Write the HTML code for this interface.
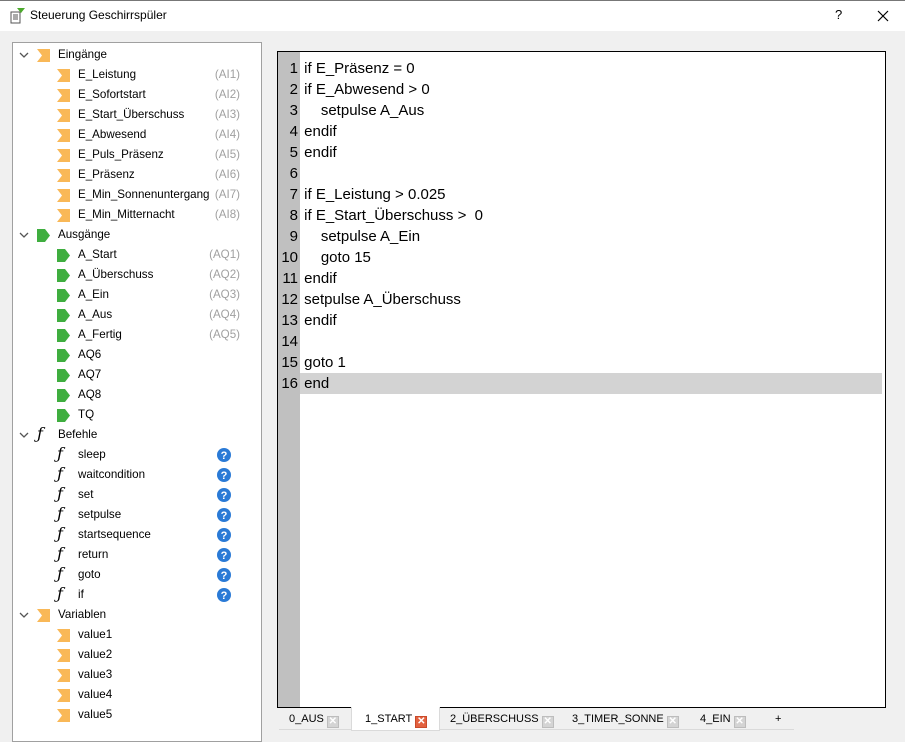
<!DOCTYPE html>
<html><head><meta charset="utf-8"><style>
*{margin:0;padding:0;box-sizing:border-box}
body{width:905px;height:738px;background:#f0f0f0;font-family:"Segoe UI","Liberation Sans",sans-serif;position:relative;overflow:hidden;font-size:12px;color:#000}
.title{position:absolute;left:0;top:0;width:905px;height:31px;background:#fff;border-top:1px solid #777}
.title span{position:absolute;left:30px;top:7px;font-size:12px}
.panel{position:absolute;left:12px;top:42px;width:250px;height:700px;background:#fff;border:1px solid #a0a0a0;font-size:11.6px}
.r{position:absolute;height:20px;line-height:20px;white-space:nowrap}
.g{position:absolute;right:21px;color:#a0a0a0;height:20px;line-height:20px}
.ed{position:absolute;left:277px;top:51px;width:609px;height:657px;background:#fff;border:1px solid #000}
.gut{position:absolute;left:0;top:0;width:22px;height:655px;background:#c0c0c0}
.l{position:absolute;left:0;height:21px;line-height:21px;font-size:15px;width:607px;white-space:pre}
.l b{font-weight:normal;display:inline-block;width:22px;text-align:right;padding-right:2px}
.tab{position:absolute;top:708px;height:22px;line-height:22px;font-size:11px;border-bottom:1px solid #dadada;background:#f0f0f0;padding-left:10px}
.x{display:inline-block;width:12px;height:12px;background:#d4d4d4;border:1px solid #bdbdbd;vertical-align:-2px;margin-left:3px;color:#fff;font-size:10px;line-height:10px;text-align:center;font-weight:bold}
</style></head><body>
<div class="title">
<svg style="position:absolute;left:10px;top:6px" width="16" height="18"><rect x="1" y="5" width="9" height="11" fill="#fff" stroke="#555"/><line x1="3" y1="8" x2="8" y2="8" stroke="#555"/><line x1="3" y1="10" x2="8" y2="10" stroke="#555"/><line x1="3" y1="12" x2="8" y2="12" stroke="#555"/><polygon points="7,1 15,1 11,6" fill="#4caa2c"/></svg>
<span>Steuerung Geschirrspüler</span>
<span style="left:835px;top:6px;font-size:13px">?</span>
<svg style="position:absolute;left:877px;top:9px" width="12" height="12"><path d="M1 1L11 11M11 1L1 11" stroke="#000" stroke-width="1.2"/></svg>
</div>
<div class="panel" id="p"></div>
<div class="ed"><div class="gut"></div>
<div class="l" style="top:6px"><b>1</b> if E_Präsenz = 0</div>
<div class="l" style="top:27px"><b>2</b> if E_Abwesend &gt; 0</div>
<div class="l" style="top:48px"><b>3</b>     setpulse A_Aus</div>
<div class="l" style="top:69px"><b>4</b> endif</div>
<div class="l" style="top:90px"><b>5</b> endif</div>
<div class="l" style="top:111px"><b>6</b></div>
<div class="l" style="top:132px"><b>7</b> if E_Leistung &gt; 0.025</div>
<div class="l" style="top:153px"><b>8</b> if E_Start_Überschuss &gt;  0</div>
<div class="l" style="top:174px"><b>9</b>     setpulse A_Ein</div>
<div class="l" style="top:195px"><b>10</b>     goto 15</div>
<div class="l" style="top:216px"><b>11</b> endif</div>
<div class="l" style="top:237px"><b>12</b> setpulse A_Überschuss</div>
<div class="l" style="top:258px"><b>13</b> endif</div>
<div class="l" style="top:279px"><b>14</b></div>
<div class="l" style="top:300px"><b>15</b> goto 1</div>
<div class="l" style="top:321px;background:linear-gradient(to right,transparent 22px,#d3d3d3 22px,#d3d3d3 604px,transparent 604px)"><b>16</b> end</div>
</div>
<div class="tab" style="left:279px;width:72px">0_AUS<span class="x">✕</span></div>
<div class="tab" style="left:351px;width:89px;background:#fff;border:1px solid #dadada;border-top:none;padding-left:13px;top:707px;height:24px;line-height:24px">1_START<span class="x" style="background:#e3613f;border-color:#c94a2a">✕</span></div>
<div class="tab" style="left:440px;width:122px">2_ÜBERSCHUSS<span class="x">✕</span></div>
<div class="tab" style="left:562px;width:128px">3_TIMER_SONNE<span class="x">✕</span></div>
<div class="tab" style="left:690px;width:72px">4_EIN<span class="x">✕</span></div>
<div class="tab" style="left:762px;width:32px;padding-left:13px">+</div>
<script>
var p=document.getElementById('p'),h='';
var O='<svg width="14" height="13" style="position:absolute;top:4px"><polygon points="0,0 13,0 13,13 0,13 5,6.5" fill="#f9b857"/></svg>';
var G='<svg width="14" height="13" style="position:absolute;top:4px"><polygon points="0,0 8,0 13,6.5 8,13 0,13" fill="#3fae3f"/></svg>';
var F='<span style="position:absolute;top:-1px;font-family:\'DejaVu Serif\',serif;font-style:italic;font-size:16px">ƒ</span>';
var Q='<svg width="14" height="14" style="position:absolute;left:204px;top:3px"><circle cx="7" cy="7" r="7" fill="#2a7ad6"/><text x="7" y="11" font-size="11" font-weight="bold" fill="#fff" text-anchor="middle" font-family="Liberation Sans">?</text></svg>';
var ch='<svg width="10" height="8" style="position:absolute;left:6px;top:7px"><path d="M1 1L5 5L9 1" stroke="#555" fill="none" stroke-width="1.3"/></svg>';
var y=2;
function par(ic,t){h+='<div class="r" style="top:'+y+'px;left:0;width:248px">'+ch+'<span style="position:absolute;left:24px">'+ic+'</span><span style="position:absolute;left:45px">'+t+'</span></div>';y+=20;}
function kid(ic,t,g,q){h+='<div class="r" style="top:'+y+'px;left:0;width:248px"><span style="position:absolute;left:44px">'+ic+'</span><span style="position:absolute;left:65px">'+t+'</span>'+(g?'<span class="g">'+g+'</span>':'')+(q?Q:'')+'</div>';y+=20;}
par(O,'Eingänge');
['E_Leistung','E_Sofortstart','E_Start_Überschuss','E_Abwesend','E_Puls_Präsenz','E_Präsenz','E_Min_Sonnenuntergang','E_Min_Mitternacht'].forEach(function(t,i){kid(O,t,'(AI'+(i+1)+')')});
par(G,'Ausgänge');
['A_Start','A_Überschuss','A_Ein','A_Aus','A_Fertig'].forEach(function(t,i){kid(G,t,'(AQ'+(i+1)+')')});
['AQ6','AQ7','AQ8','TQ'].forEach(function(t){kid(G,t)});
par(F,'Befehle');
['sleep','waitcondition','set','setpulse','startsequence','return','goto','if'].forEach(function(t){kid(F,t,null,1)});
par(O,'Variablen');
['value1','value2','value3','value4','value5'].forEach(function(t){kid(O,t)});
p.innerHTML=h;
</script>
</body></html>
